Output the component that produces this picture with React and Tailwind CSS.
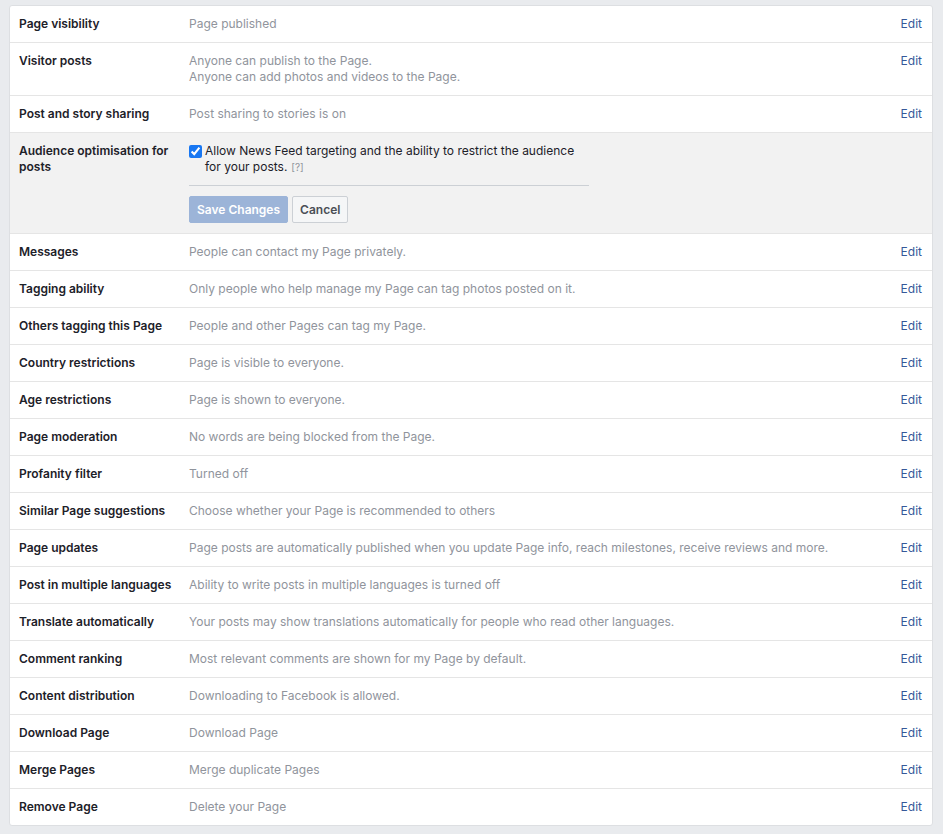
import React, { useState } from 'react';

const rows = [
  { label: 'Page visibility', value: ['Page published'] },
  { label: 'Visitor posts', value: ['Anyone can publish to the Page.', 'Anyone can add photos and videos to the Page.'] },
  { label: 'Post and story sharing', value: ['Post sharing to stories is on'] },
  { label: 'Audience optimisation for posts', editing: true },
  { label: 'Messages', value: ['People can contact my Page privately.'] },
  { label: 'Tagging ability', value: ['Only people who help manage my Page can tag photos posted on it.'] },
  { label: 'Others tagging this Page', value: ['People and other Pages can tag my Page.'] },
  { label: 'Country restrictions', value: ['Page is visible to everyone.'] },
  { label: 'Age restrictions', value: ['Page is shown to everyone.'] },
  { label: 'Page moderation', value: ['No words are being blocked from the Page.'] },
  { label: 'Profanity filter', value: ['Turned off'] },
  { label: 'Similar Page suggestions', value: ['Choose whether your Page is recommended to others'] },
  { label: 'Page updates', value: ['Page posts are automatically published when you update Page info, reach milestones, receive reviews and more.'] },
  { label: 'Post in multiple languages', value: ['Ability to write posts in multiple languages is turned off'] },
  { label: 'Translate automatically', value: ['Your posts may show translations automatically for people who read other languages.'] },
  { label: 'Comment ranking', value: ['Most relevant comments are shown for my Page by default.'] },
  { label: 'Content distribution', value: ['Downloading to Facebook is allowed.'] },
  { label: 'Download Page', value: ['Download Page'] },
  { label: 'Merge Pages', value: ['Merge duplicate Pages'] },
  { label: 'Remove Page', value: ['Delete your Page'] },
];

const AudienceEditor = () => {
  const [checked, setChecked] = useState(true);
  return (
    <div className="flex-1">
      <label className="flex items-start">
        <input
          type="checkbox"
          checked={checked}
          onChange={() => setChecked(!checked)}
          className="mt-[2px] mr-[3px] w-[13px] h-[13px] accent-[#1877f2]"
        />
        <span className="text-[#1d2129] w-[376px]">
          Allow News Feed targeting and the ability to restrict the audience for your posts.
          <span className="inline-block ml-[4px] text-[10px] leading-[12px] text-[#90949c]">[?]</span>
        </span>
      </label>
      <div className="w-[400px] border-t border-[#ccd0d5] mt-[10px] mb-[10px]" />
      <div className="flex gap-[4px]">
        <button className="h-[27px] px-[7px] rounded-[2px] bg-[#9cb4d8] border border-[#9cb4d8] text-white font-semibold">
          Save Changes
        </button>
        <button className="h-[27px] px-[7px] rounded-[2px] bg-[#f5f6f7] border border-[#ccd0d5] text-[#4b4f56] font-semibold">
          Cancel
        </button>
      </div>
    </div>
  );
};

export default function App() {
  return (
    <div
      className="min-h-screen bg-[#e9ebee] pt-[5px] pl-[9px] pr-[10px] pb-[8px] text-[12px] leading-[16px]"
      style={{ fontFamily: '"Inter", "Roboto", "Liberation Sans", sans-serif' }}
    >
      <div className="bg-white border border-[#dddfe2] rounded-[3px] overflow-hidden">
        {rows.map((row, i) => (
          <div
            key={row.label}
            className={
              (i > 0 ? 'border-t border-[#e5e5e5] ' : '') +
              (row.editing ? 'bg-[#f2f2f2] ' : '') +
              'flex pl-[9px] pr-[10px] py-[10px]'
            }
          >
            <div className="w-[170px] shrink-0 pr-[10px] font-semibold text-[#1d2129]">{row.label}</div>
            {row.editing ? (
              <AudienceEditor />
            ) : (
              <>
                <div className="flex-1 text-[#90949c]">
                  {row.value.map((v) => (
                    <div key={v}>{v}</div>
                  ))}
                </div>
                <a href="#" className="text-[#365899] ml-4">Edit</a>
              </>
            )}
          </div>
        ))}
      </div>
    </div>
  );
}
